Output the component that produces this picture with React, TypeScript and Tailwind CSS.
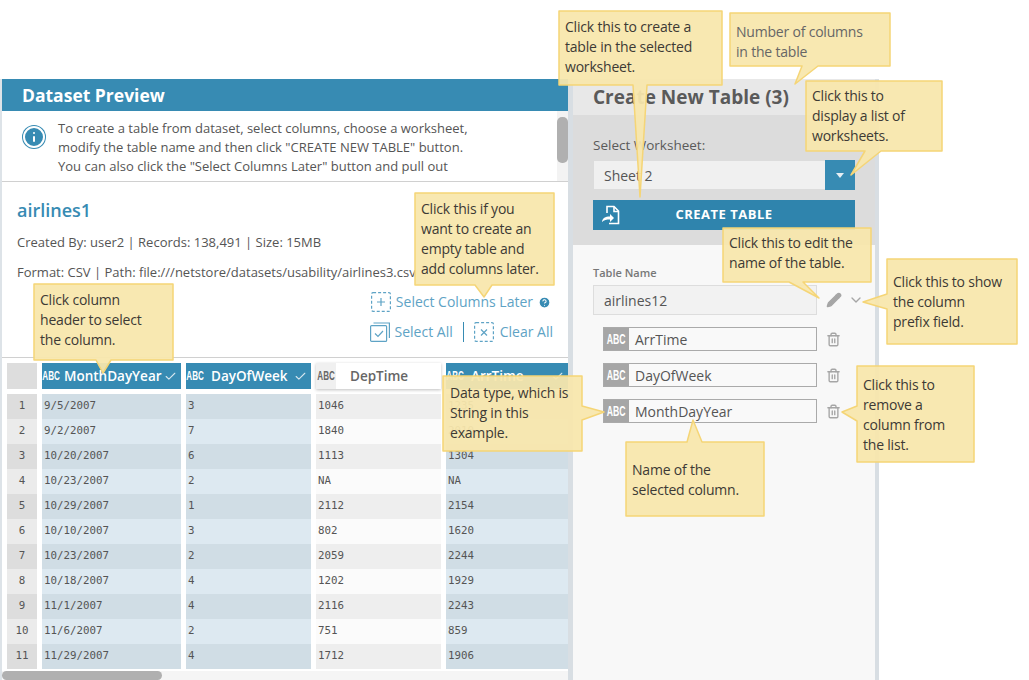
import { Check, ChevronDown, CircleHelp, Info, Pencil, Trash2 } from 'lucide-react'

const rows = [
  ['1', '9/5/2007', '3', '1046', '1235'],
  ['2', '9/2/2007', '7', '1840', '2010'],
  ['3', '10/20/2007', '6', '1113', '1304'],
  ['4', '10/23/2007', '2', 'NA', 'NA'],
  ['5', '10/29/2007', '1', '2112', '2154'],
  ['6', '10/10/2007', '3', '802', '1620'],
  ['7', '10/23/2007', '2', '2059', '2244'],
  ['8', '10/18/2007', '4', '1202', '1929'],
  ['9', '11/1/2007', '4', '2116', '2243'],
  ['10', '11/6/2007', '2', '751', '859'],
  ['11', '11/29/2007', '4', '1712', '1906'],
]

const callouts = [
  {
    d: 'M559 11H722V85H647L640 197L633 85H559Z',
    text: 'left-[565px] top-[17px]',
    lines: ['Click this to create a', 'table in the selected', 'worksheet.'],
  },
  {
    d: 'M730 13H890V66H818L795 84L802 66H730Z',
    text: 'left-[736px] top-[22px] text-[#666]',
    lines: ['Number of columns', 'in the table'],
  },
  {
    d: 'M806 81H942V151H881L851 175L865 151H806Z',
    text: 'left-[812px] top-[86px]',
    lines: ['Click this to', 'display a list of', 'worksheets.'],
  },
  {
    d: 'M723 228H871V282H803L819 298L789 282H723Z',
    text: 'left-[729px] top-[233px]',
    lines: ['Click this to edit the', 'name of the table.'],
  },
  {
    d: 'M887 259H1017V344H887V309L863 302L887 294Z',
    text: 'left-[893px] top-[272px]',
    lines: ['Click this to show', 'the column', 'prefix field.'],
  },
  {
    d: 'M857 366H974V462H857V421L842 412L857 406Z',
    text: 'left-[863px] top-[375px]',
    lines: ['Click this to', 'remove a', 'column from', 'the list.'],
  },
  {
    d: 'M626 442H687L693 420L702 442H764V516H626Z',
    text: 'left-[632px] top-[460px]',
    lines: ['Name of the', 'selected column.'],
  },
  {
    d: 'M443 376H582V406L604 412L582 420V451H443Z',
    text: 'left-[450px] top-[383px]',
    lines: ['Data type, which is', 'String in this', 'example.'],
  },
  {
    d: 'M415 193H554V285H492L484 297L475 285H415Z',
    text: 'left-[421px] top-[199px]',
    lines: ['Click this if you', 'want to create an', 'empty table and', 'add columns later.'],
  },
  {
    d: 'M34 284H173V360H111L103 373L96 360H34Z',
    text: 'left-[40px] top-[290px]',
    lines: ['Click column', 'header to select', 'the column.'],
  },
]

function Abc({ className }: { className: string }) {
  return (
    <span className={`inline-block origin-center scale-x-[0.62] font-['Liberation_Sans',sans-serif] font-bold tracking-normal ${className}`}>
      ABC
    </span>
  )
}

function DashedBox({ sign }: { sign: 'plus' | 'x' }) {
  return (
    <svg width="20" height="20" viewBox="0 0 20 20" fill="none" stroke="#5ea3c5" strokeWidth="1.2">
      <rect x="0.6" y="0.6" width="18.8" height="18.8" rx="1.5" strokeDasharray="3 2" />
      {sign === 'plus' ? <path d="M6 10H14M10 6V14" /> : <path d="M7 7.5L13 13.5M13 7.5L7 13.5" />}
    </svg>
  )
}

function ColumnHeader({ name, selected, first }: { name: string; selected: boolean; first?: boolean }) {
  if (selected) {
    return (
      <div className="flex h-[26px] items-center bg-[#378bb3] text-white">
        <div className="flex w-[18px] justify-center">
          <Abc className="text-[13px]" />
        </div>
        <div className={`flex-1 text-[13.5px] font-semibold ${first ? 'pl-1' : 'pl-[7px]'}`}>{name}</div>
        <Check size={13} className="mr-[4px] text-[#d5e6ef]" />
      </div>
    )
  }
  return (
    <div className="flex h-[26px] items-center bg-white shadow-[0_1px_3px_rgba(0,0,0,0.25)]">
      <div className="flex h-full w-[20px] items-center justify-center bg-[#f0f0f0] text-[#666]">
        <Abc className="text-[13px]" />
      </div>
      <div className="flex-1 pl-[14px] text-[13.5px] font-semibold text-[#666]">{name}</div>
    </div>
  )
}

function TableRow({ row, index }: { row: string[]; index: number }) {
  const odd = index % 2 === 0
  const selected = odd ? 'bg-[#d0dde5]' : 'bg-[#dde9f1]'
  const plain = odd ? 'bg-[#eeeeee]' : 'bg-[#fbfbfb]'
  const cell = "flex h-[25px] items-center pl-[2px] font-['DejaVu_Sans_Mono',monospace] text-[10.8px] text-[#555]"
  return (
    <>
      <div className={`${cell} justify-center !pl-0 ${odd ? 'bg-[#dddddd]' : 'bg-[#ebebeb]'}`}>{row[0]}</div>
      <div className={`${cell} ${selected}`}>{row[1]}</div>
      <div className={`${cell} ${selected}`}>{row[2]}</div>
      <div className={`${cell} ${plain}`}>{row[3]}</div>
      <div className={`${cell} ${selected}`}>{row[4]}</div>
    </>
  )
}

function PickedColumn({ name }: { name: string }) {
  return (
    <div className="flex items-center">
      <div className="flex h-[24px] w-[214px] items-center border border-[#aaa] bg-[#f9f9f9]">
        <div className="flex h-full w-[25px] items-center justify-center bg-[#a6a6a6] text-white">
          <Abc className="text-[14px]" />
        </div>
        <span className="pl-[6px] text-[14px] text-[#555]">{name}</span>
      </div>
      <Trash2 size={15} strokeWidth={2.2} className="ml-[9px] text-[#a6a6a6]" />
    </div>
  )
}

export default function App() {
  return (
    <div className="relative h-[680px] w-[1029px] overflow-hidden bg-white font-['Open_Sans',sans-serif]">
      <div className="flex h-full pt-[79px]">
        {/* Dataset preview */}
        <div className="flex w-[568px] flex-col border-l-2 border-[#dde3e8]">
          <div className="flex h-[32px] items-center bg-[#378bb3] pl-[20px] text-[17.5px] font-bold text-white">
            Dataset Preview
          </div>
          <div className="flex h-[71px] border-b border-[#d0d0d0]">
            <div className="flex pl-[20px] pt-[14px]">
              <div className="flex h-[24px] w-[24px] items-center justify-center rounded-full bg-[#378bb3]">
                <Info size={24} className="fill-[#378bb3] text-white" />
              </div>
            </div>
            <div className="flex-1 pl-[12px] pt-[8px] text-[13px] leading-[19px] text-[#555]">
              To create a table from dataset, select columns, choose a worksheet,
              <br />
              modify the table name and then click "CREATE NEW TABLE" button.
              <br />
              You can also click the "Select Columns Later" button and pull out
            </div>
            <div className="h-full w-[11px] bg-[#f3f3f3] pt-[6px]">
              <div className="h-[46px] rounded-[5px] bg-[#b0b0b0]" />
            </div>
          </div>

          <div className="h-[176px] overflow-hidden border-b border-[#d0d0d0] pl-[15px] pr-[15px] pt-[16px]">
            <div className="text-[18px] leading-[24px] font-semibold text-[#378bb3]">airlines1</div>
            <div className="mt-[10px] text-[13px] leading-[20px] text-[#555]">
              Created By: user2 | Records: 138,491 | Size: 15MB
            </div>
            <div className="mt-[10px] whitespace-nowrap text-[13px] leading-[20px] text-[#555]">
              Format: CSV | Path: file:///netstore/datasets/usability/airlines3.csv
            </div>
            <div className="mt-[10px] flex items-center justify-end gap-[5px] pr-[2px] text-[14px] leading-[20px] text-[#5ea3c5]">
              <DashedBox sign="plus" />
              <span>Select Columns Later</span>
              <CircleHelp size={13} className="fill-[#378bb3] text-white" />
            </div>
            <div className="mt-[10px] flex items-center justify-end text-[14px] leading-[20px] text-[#5ea3c5]">
              <svg width="20" height="20" viewBox="0 0 20 20" fill="none" stroke="#5ea3c5" strokeWidth="1.2">
                <rect x="0.6" y="3.6" width="16" height="15.8" rx="1" />
                <path d="M3.5 1H19.4V16" />
                <path d="M5 11.5L8 14.5L13 9" />
              </svg>
              <span className="ml-[5px]">Select All</span>
              <div className="mx-[10px] h-[20px] w-px bg-[#378bb3]" />
              <DashedBox sign="x" />
              <span className="ml-[6px]">Clear All</span>
            </div>
          </div>

          <div className="grid grid-cols-[30px_139px_125px_125px_122px] gap-x-[5px] pl-[5px] pt-[5px]">
            <div className="h-[26px] bg-[#dddddd]" />
            <ColumnHeader name="MonthDayYear" selected first />
            <ColumnHeader name="DayOfWeek" selected />
            <ColumnHeader name="DepTime" selected={false} />
            <ColumnHeader name="ArrTime" selected />
            <div className="col-span-5 h-[5px]" />
            {rows.map((row, i) => (
              <TableRow key={row[0]} row={row} index={i} />
            ))}
          </div>
          <div className="mt-[2px] h-[10px] flex-1 bg-[#f5f5f5]">
            <div className="h-[9px] w-[160px] rounded-[5px] bg-[#b0b0b0]" />
          </div>
        </div>

        {/* Create new table */}
        <div className="flex w-[311px] flex-col border-x-[5px] border-[#d8dee3] border-r-[4px]">
          <div className="flex h-[36px] items-center bg-[#e8e8e8] pl-[20px] text-[19px] font-bold text-[#5a5a5a]">
            Create New Table (3)
          </div>
          <div className="h-[130px] bg-[#dcdcdc] pl-[20px] pr-[20px] pt-[20px]">
            <div className="text-[13.5px] leading-[20px] text-[#5a5a5a]">Select Worksheet:</div>
            <div className="mt-[5px] flex h-[30px] items-center">
              <div className="ml-px flex h-[28px] flex-1 items-center bg-[#f0f0f0] pl-[10px] text-[14px] text-[#555]">
                Sheet 2
              </div>
              <div className="flex h-[30px] w-[30px] items-center justify-center bg-[#378bb3]">
                <div className="h-0 w-0 border-x-[4px] border-t-[5px] border-x-transparent border-t-[#e6eef3]" />
              </div>
            </div>
            <div className="relative mt-[10px] flex h-[30px] items-center justify-center bg-[#2f84ad] text-[13px] font-bold tracking-[0.5px] text-white">
              <svg className="absolute left-[7px]" width="20" height="20" viewBox="0 0 20 20" fill="none" stroke="white" strokeWidth="1.6">
                <path d="M7 8V1.5H14L18.5 6V18.5H9" />
                <path d="M14 2V6.5H18" />
                <path d="M2 17C2.5 13 5 11.5 10 11.5V9L14 13L10 17V14.5C6.5 14.5 4 15 2 17Z" fill="white" stroke="none" />
              </svg>
              CREATE TABLE
            </div>
          </div>
          <div className="flex-1 bg-[#f8f8f8] pl-[20px] pt-[20px]">
            <div className="text-[11px] leading-[16px] font-semibold text-[#777]">Table Name</div>
            <div className="mt-[4px] flex items-center">
              <div className="flex h-[30px] w-[224px] items-center border border-[#ddd] bg-[#f2f2f2] pl-[10px] text-[14px] text-[#555]">
                airlines12
              </div>
              <Pencil size={16} className="ml-[9px] fill-[#a6a6a6] text-[#a6a6a6]" />
              <ChevronDown size={16} strokeWidth={2} className="ml-[6px] text-[#a6a6a6]" />
            </div>
            <div className="mt-[12px] flex flex-col gap-[12px] pl-[10px]">
              <PickedColumn name="ArrTime" />
              <PickedColumn name="DayOfWeek" />
              <PickedColumn name="MonthDayYear" />
            </div>
          </div>
        </div>
      </div>

      {/* Callouts */}
      <svg className="absolute left-0 top-0" width="1029" height="680" viewBox="0 0 1029 680">
        {callouts.map((c) => (
          <path key={c.d} d={c.d} fill="#f8e7ac" fillOpacity="0.94" stroke="#f5d576" strokeWidth="1.5" strokeLinejoin="round" />
        ))}
      </svg>
      {callouts.map((c) => (
        <div
          key={c.d}
          className={`absolute whitespace-nowrap text-[14px] leading-[20px] tracking-[-0.2px] ${c.text.includes('text-[#666]') ? '' : 'text-[#3d3a35]'} ${c.text}`}
        >
          {c.lines.map((line) => (
            <div key={line}>{line}</div>
          ))}
        </div>
      ))}
    </div>
  )
}
